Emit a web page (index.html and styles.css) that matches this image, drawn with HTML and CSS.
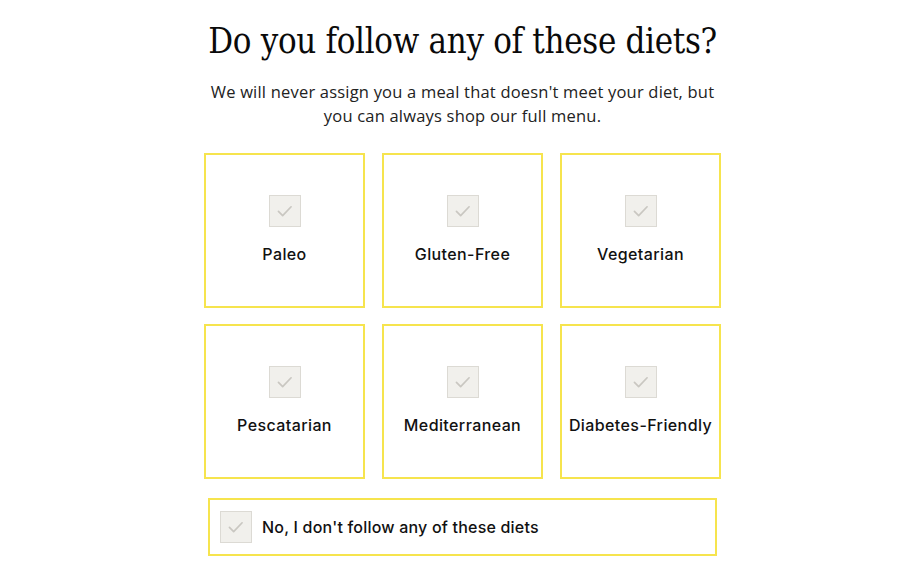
FILE: index.html
```html
<!DOCTYPE html>
<html lang="en">
<head>
    <meta charset="UTF-8">
    <meta name="viewport" content="width=device-width, initial-scale=1.0">
    <title>Diet preferences</title>
    <link rel="stylesheet" href="styles.css">
</head>
<body>
    <div class="container">
        <h1>Do you follow any of these diets?</h1>
        <p class="intro">We will never assign you a meal that doesn't meet your diet, but you can always shop our full menu.</p>

        <div class="diet-grid">
            <label class="diet-card">
                <span class="check"><svg viewBox="0 0 32 32"><path d="M9 16.5l4.5 4.5 9-9.5"/></svg></span>
                <span class="diet-name">Paleo</span>
            </label>
            <label class="diet-card">
                <span class="check"><svg viewBox="0 0 32 32"><path d="M9 16.5l4.5 4.5 9-9.5"/></svg></span>
                <span class="diet-name">Gluten-Free</span>
            </label>
            <label class="diet-card">
                <span class="check"><svg viewBox="0 0 32 32"><path d="M9 16.5l4.5 4.5 9-9.5"/></svg></span>
                <span class="diet-name">Vegetarian</span>
            </label>
            <label class="diet-card">
                <span class="check"><svg viewBox="0 0 32 32"><path d="M9 16.5l4.5 4.5 9-9.5"/></svg></span>
                <span class="diet-name">Pescatarian</span>
            </label>
            <label class="diet-card">
                <span class="check"><svg viewBox="0 0 32 32"><path d="M9 16.5l4.5 4.5 9-9.5"/></svg></span>
                <span class="diet-name">Mediterranean</span>
            </label>
            <label class="diet-card">
                <span class="check"><svg viewBox="0 0 32 32"><path d="M9 16.5l4.5 4.5 9-9.5"/></svg></span>
                <span class="diet-name">Diabetes-Friendly</span>
            </label>
        </div>

        <label class="none-option">
            <span class="check"><svg viewBox="0 0 32 32"><path d="M9 16.5l4.5 4.5 9-9.5"/></svg></span>
            <span class="none-text">No, I don't follow any of these diets</span>
        </label>
    </div>
</body>
</html>
```

FILE: styles.css
```css
body {
    margin: 0;
    background-color: #fff;
    font-family: "Open Sans", "Liberation Sans", Arial, sans-serif;
    color: #111;
}
.container {
    width: 517px;
    margin: 0 auto;
    padding-top: 19px;
    padding-left: 3px;
    display: flex;
    flex-direction: column;
    align-items: center;
}
h1 {
    margin: 0;
    font-family: "DejaVu Serif", "Liberation Serif", serif;
    font-stretch: condensed;
    font-weight: normal;
    font-size: 34.5px;
    line-height: 44px;
    color: #0a0a0a;
    letter-spacing: -0.3px;
    white-space: nowrap;
}
.intro {
    margin: 17px 0 0;
    width: 512px;
    text-align: center;
    font-size: 16.5px;
    letter-spacing: 0.2px;
    line-height: 24px;
    color: #222;
}
.diet-grid {
    margin-top: 25px;
    width: 100%;
    display: grid;
    grid-template-columns: repeat(3, 1fr);
    column-gap: 17px;
    row-gap: 16px;
}
.diet-card {
    height: 155px;
    box-sizing: border-box;
    border: 2px solid #f6e44e;
    display: flex;
    flex-direction: column;
    align-items: center;
    padding-top: 40px;
    cursor: pointer;
}
.check {
    width: 32px;
    height: 32px;
    box-sizing: border-box;
    border: 1px solid #dcdad4;
    background-color: #f1f0ec;
    display: block;
}
.check svg {
    width: 30px;
    height: 30px;
    display: block;
    fill: none;
    stroke: #c9c7c1;
    stroke-width: 1.8;
    stroke-linecap: round;
    stroke-linejoin: round;
}
.diet-name {
    margin-top: 17px;
    font-family: Inter, "Liberation Sans", sans-serif;
    font-size: 16px;
    font-weight: 500;
    letter-spacing: 0.4px;
    color: #111;
}
.none-option {
    margin-top: 19px;
    width: 509px;
    height: 58px;
    box-sizing: border-box;
    border: 2px solid #f6e44e;
    display: flex;
    align-items: center;
    gap: 10px;
    padding-left: 10px;
    cursor: pointer;
}
.none-text {
    font-family: Inter, "Liberation Sans", sans-serif;
    font-size: 16px;
    font-weight: 500;
    letter-spacing: 0.2px;
}
```
